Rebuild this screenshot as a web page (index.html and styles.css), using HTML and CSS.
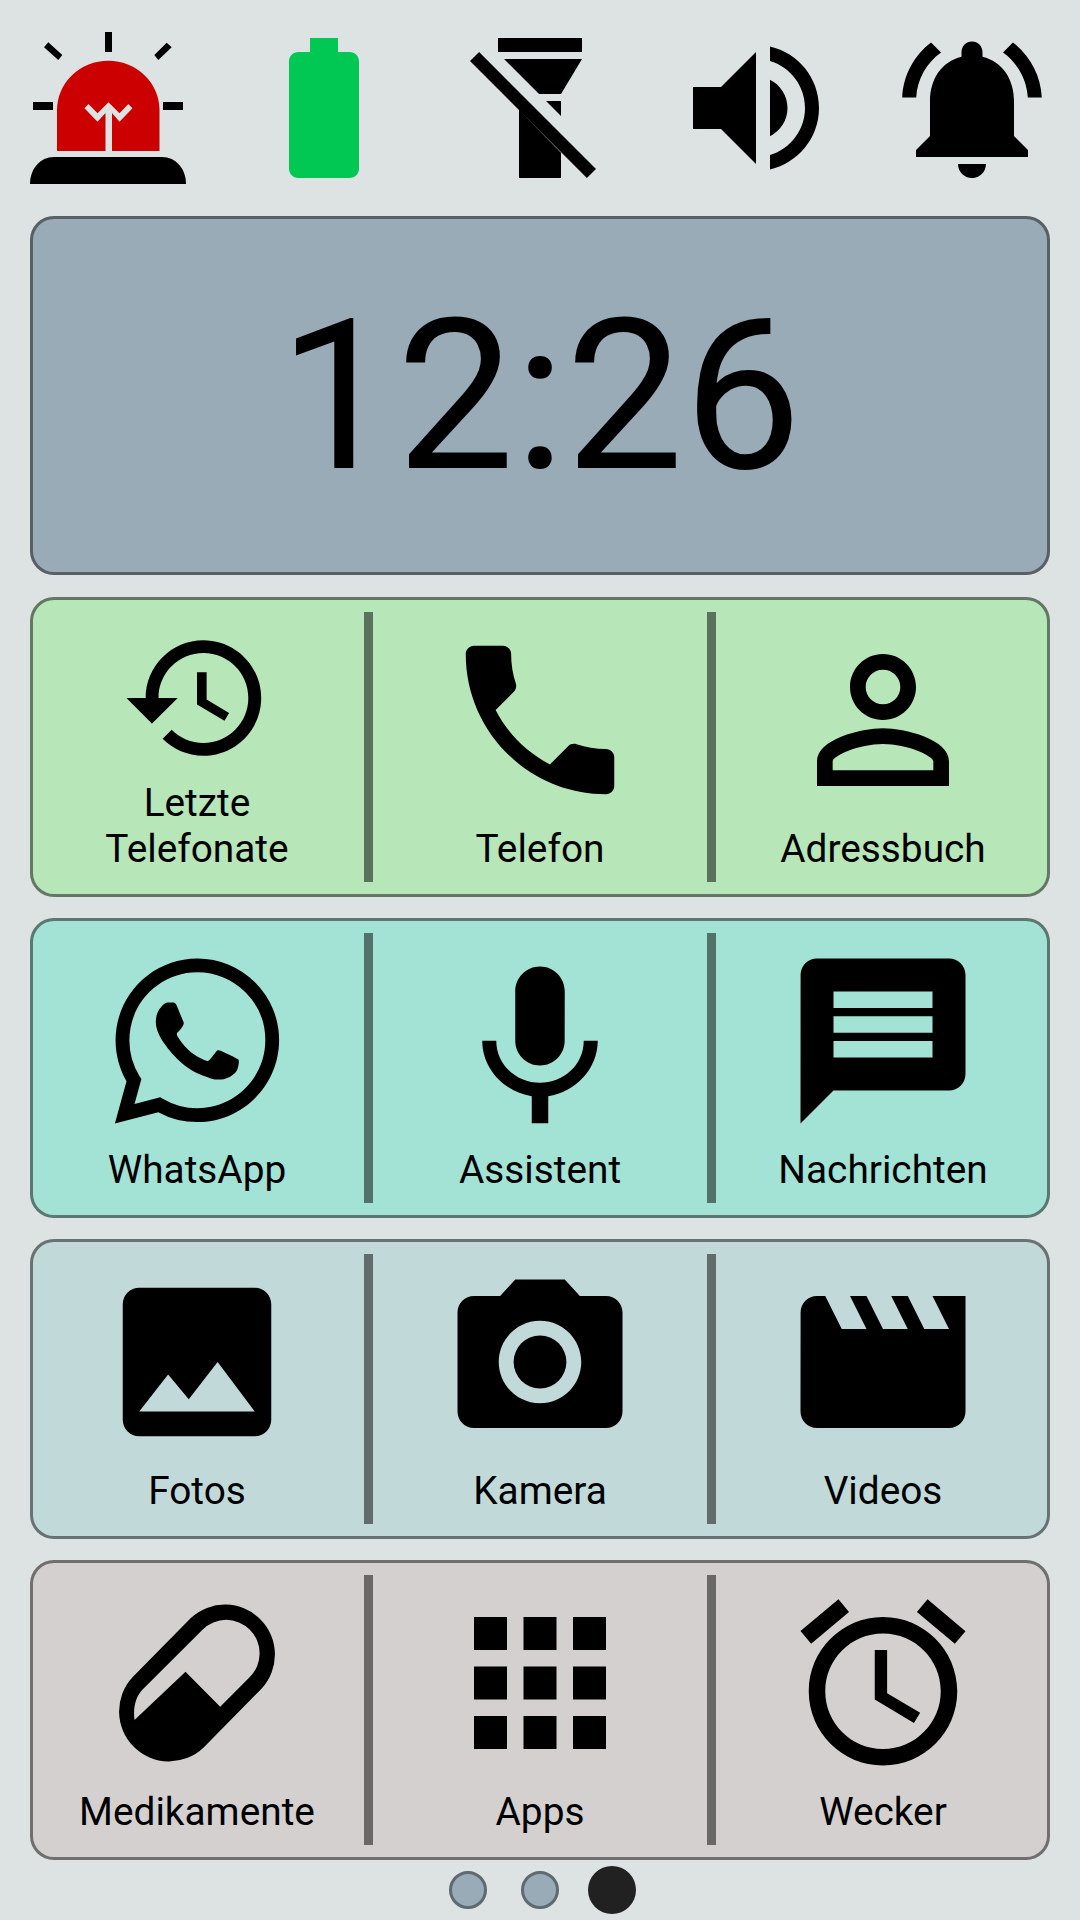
FILE: index.html
```html
<!DOCTYPE html>
<html lang="de">
<head>
<meta charset="utf-8">
<title>Startseite</title>
<link rel="stylesheet" href="styles.css">
</head>
<body>
<main class="screen">
  <header class="status">
    <svg class="status-icon" viewBox="24 24 168 168" aria-label="Notruf">
      <path d="M105 32h7v20h-7zM33 102h20v8H33zM163 102h20v8h-20zM48.300 42.300 62.300 55 58.300 60 44 47.300zM166.700 42.700l5 4.600L158.300 60l-4-5z" fill="#000"/>
      <path d="M57 151v-41a51 49 0 0 1 102.500 0v41h-47.500v-38l7.500 8.700 13-13.400-4.200-4.300-8.800 9.300-11-11-11 11-9-9.300-4.100 4.300 13.100 13.400 8-8.700v38z" fill="#c00"/>
      <path d="M30 184c0-15 10-27 24-27h108c14 0 24 12 24 27z" fill="#000"/>
    </svg>
    <svg class="status-icon" viewBox="0 0 24 24" aria-label="Akku">
      <path d="M15.670 4H14V2h-4v2H8.330C7.600 4 7 4.600 7 5.330v15.340C7 21.400 7.600 22 8.330 22h7.340c.74 0 1.330-.6 1.330-1.330V5.330C17 4.600 16.400 4 15.670 4z" fill="#00c853"/>
    </svg>
    <svg class="status-icon" viewBox="0 0 24 24" aria-label="Taschenlampe aus">
      <path d="M6 2h12v2H6zM6.860 5H18l-3 5h-3.140zM12.860 11H15v2.140zM9 12.300l6 6.100V22H9zM2 5.300 3.300 4 20 20.700 18.700 22z"/>
    </svg>
    <svg class="status-icon" viewBox="0 0 24 24" aria-label="Lautstärke">
      <path d="M3 9v6h4l5 5V4L7 9H3zM16.500 12c0-1.770-1.020-3.290-2.500-4.030v8.050c1.480-.73 2.500-2.250 2.500-4.020zM14 3.230v2.060c2.890.86 5 3.540 5 6.710s-2.110 5.850-5 6.710v2.060c4.010-.91 7-4.490 7-8.770s-2.990-7.860-7-8.770z"/>
    </svg>
    <svg class="status-icon" viewBox="0 0 24 24" aria-label="Klingel">
      <path d="M7.580 4.080 6.150 2.650C3.750 4.480 2.170 7.300 2.030 10.500h2c.15-2.650 1.510-4.970 3.550-6.420zm12.390 6.420h2c-.15-3.200-1.730-6.020-4.120-7.850l-1.420 1.430c2.020 1.450 3.390 3.770 3.540 6.420zM18 11c0-3.070-1.640-5.640-4.500-6.320V4c0-.83-.67-1.500-1.500-1.500s-1.500.67-1.500 1.500v.68C7.630 5.360 6 7.920 6 11v5l-2 2v1h16v-1l-2-2v-5zm-6 11c.14 0 .27-.01.4-.04.65-.14 1.180-.58 1.440-1.180.1-.24.15-.5.15-.78h-4c.01 1.100.9 2 2.010 2z"/>
    </svg>
  </header>

  <section class="card clock"><span class="time">12:26</span></section>

  <section class="card row row-green">
    <a class="cell">
      <svg class="icon icon-small" viewBox="0 0 24 24"><path d="M13 3c-4.970 0-9 4.030-9 9H1l3.890 3.890.07.14L9 12H6c0-3.870 3.130-7 7-7s7 3.130 7 7-3.130 7-7 7c-1.930 0-3.680-.79-4.940-2.060l-1.420 1.420C8.270 19.990 10.510 21 13 21c4.970 0 9-4.030 9-9s-4.030-9-9-9zm-1 5v5l4.280 2.540.72-1.210-3.500-2.080V8H12z"/></svg>
      <span class="label">Letzte<br>Telefonate</span>
    </a>
    <i class="divider"></i>
    <a class="cell">
      <svg class="icon" viewBox="0 0 24 24"><path d="M6.620 10.790c1.440 2.830 3.760 5.140 6.590 6.590l2.200-2.200c.27-.27.67-.36 1.020-.24 1.120.37 2.330.57 3.570.57.55 0 1 .45 1 1V20c0 .55-.45 1-1 1-9.390 0-17-7.610-17-17 0-.55.45-1 1-1h3.500c.55 0 1 .45 1 1 0 1.250.2 2.450.57 3.570.11.35.03.74-.25 1.020l-2.200 2.200z"/></svg>
      <span class="label">Telefon</span>
    </a>
    <i class="divider"></i>
    <a class="cell">
      <svg class="icon" viewBox="0 0 24 24"><path d="M12 5.900c1.160 0 2.100.94 2.100 2.100s-.94 2.100-2.100 2.100S9.900 9.160 9.900 8s.94-2.100 2.100-2.100m0 9c2.970 0 6.100 1.460 6.100 2.100v1.100H5.900V17c0-.64 3.130-2.100 6.100-2.100M12 4C9.790 4 8 5.790 8 8s1.790 4 4 4 4-1.790 4-4-1.790-4-4-4zm0 9c-2.670 0-8 1.340-8 4v3h16v-3c0-2.660-5.330-4-8-4z"/></svg>
      <span class="label">Adressbuch</span>
    </a>
  </section>

  <section class="card row row-teal">
    <a class="cell">
      <svg class="icon" viewBox="-2.400 -2.400 28.800 28.800"><path d="M17.472 14.382c-.297-.149-1.758-.867-2.030-.967-.273-.099-.471-.148-.67.15-.197.297-.767.966-.94 1.164-.173.199-.347.223-.644.075-.297-.15-1.255-.463-2.390-1.475-.883-.788-1.480-1.761-1.653-2.059-.173-.297-.018-.458.13-.606.134-.133.298-.347.446-.52.149-.174.198-.298.298-.497.099-.198.05-.371-.025-.52-.075-.149-.669-1.612-.916-2.207-.242-.579-.487-.5-.669-.51-.173-.008-.371-.01-.57-.01-.198 0-.52.074-.792.372-.272.297-1.040 1.016-1.040 2.479 0 1.462 1.065 2.875 1.213 3.074.149.198 2.096 3.200 5.077 4.487.709.306 1.262.489 1.694.625.712.227 1.360.195 1.871.118.571-.085 1.758-.719 2.006-1.413.248-.694.248-1.289.173-1.413-.074-.124-.272-.198-.57-.347m-5.421 7.403h-.004a9.870 9.870 0 0 1-5.031-1.378l-.361-.214-3.741.982.998-3.648-.235-.374a9.860 9.860 0 0 1-1.510-5.260c.001-5.450 4.436-9.884 9.888-9.884 2.640 0 5.122 1.030 6.988 2.898a9.825 9.825 0 0 1 2.893 6.994c-.003 5.450-4.437 9.884-9.885 9.884m8.413-18.297A11.815 11.815 0 0 0 12.050 0C5.495 0 .16 5.335.157 11.892c0 2.096.547 4.142 1.588 5.945L.057 24l6.305-1.654a11.882 11.882 0 0 0 5.683 1.448h.005c6.554 0 11.890-5.335 11.893-11.893a11.821 11.821 0 0 0-3.480-8.413z"/></svg>
      <span class="label">WhatsApp</span>
    </a>
    <i class="divider"></i>
    <a class="cell">
      <svg class="icon icon-low" viewBox="0 0 24 24"><path d="M12 14c1.660 0 2.990-1.340 2.990-3L15 5c0-1.660-1.340-3-3-3S9 3.340 9 5v6c0 1.660 1.340 3 3 3zm5.300-3c0 3-2.540 5.100-5.300 5.100S6.700 14 6.700 11H5c0 3.410 2.720 6.230 6 6.720V21h2v-3.280c3.280-.48 6-3.300 6-6.720h-1.700z"/></svg>
      <span class="label">Assistent</span>
    </a>
    <i class="divider"></i>
    <a class="cell">
      <svg class="icon" viewBox="0 0 24 24"><path d="M20 2H4c-1.100 0-1.990.9-1.990 2L2 22l4-4h14c1.100 0 2-.9 2-2V4c0-1.100-.9-2-2-2zm-2 12H6v-2h12v2zm0-3H6V9h12v2zm0-3H6V6h12v2z"/></svg>
      <span class="label">Nachrichten</span>
    </a>
  </section>

  <section class="card row row-blue">
    <a class="cell">
      <svg class="icon" viewBox="0 0 24 24"><path d="M21 19V5c0-1.100-.9-2-2-2H5c-1.100 0-2 .9-2 2v14c0 1.100.9 2 2 2h14c1.100 0 2-.9 2-2zM8.500 13.500l2.500 3.010L14.500 12l4.500 6H5l3.500-4.500z"/></svg>
      <span class="label">Fotos</span>
    </a>
    <i class="divider"></i>
    <a class="cell">
      <svg class="icon" viewBox="0 0 24 24"><circle cx="12" cy="12" r="3.200"/><path d="M9 2 7.170 4H4c-1.100 0-2 .9-2 2v12c0 1.100.9 2 2 2h16c1.100 0 2-.9 2-2V6c0-1.100-.9-2-2-2h-3.170L15 2H9zm3 15c-2.760 0-5-2.240-5-5s2.240-5 5-5 5 2.240 5 5-2.240 5-5 5z"/></svg>
      <span class="label">Kamera</span>
    </a>
    <i class="divider"></i>
    <a class="cell">
      <svg class="icon" viewBox="0 0 24 24"><path d="m18 4 2 4h-3l-2-4h-2l2 4h-3l-2-4H8l2 4H7L5 4H4c-1.100 0-1.990.9-1.990 2L2 18c0 1.100.9 2 2 2h16c1.100 0 2-.9 2-2V4h-4z"/></svg>
      <span class="label">Videos</span>
    </a>
  </section>

  <section class="card row row-grey">
    <a class="cell">
      <svg class="icon" viewBox="-4.500 -18 594 594"><path fill-rule="evenodd" d="M274 84A150 150 0 0 1 486 296L311 474A150 150 0 0 1 99 262ZM105 390C100 350 110 318 130 298L309 119A100 100 0 0 1 451 261L362 350 258 245Z"/></svg>
      <span class="label">Medikamente</span>
    </a>
    <i class="divider"></i>
    <a class="cell">
      <svg class="icon" viewBox="0 0 24 24"><path d="M4 8h4V4H4v4zm6 12h4v-4h-4v4zm-6 0h4v-4H4v4zm0-6h4v-4H4v4zm6 0h4v-4h-4v4zm6-10v4h4V4h-4zm-6 4h4V4h-4v4zm6 6h4v-4h-4v4zm0 6h4v-4h-4v4z"/></svg>
      <span class="label">Apps</span>
    </a>
    <i class="divider"></i>
    <a class="cell">
      <svg class="icon" viewBox="0 0 24 24"><path d="m22 5.720-4.600-3.860-1.290 1.530 4.600 3.860L22 5.720zM7.880 3.390 6.600 1.860 2 5.710l1.290 1.530 4.590-3.850zM12.500 8H11v6l4.750 2.850.75-1.230-4-2.370V8zM12 4c-4.970 0-9 4.030-9 9s4.030 9 9 9 9-4.030 9-9-4.030-9-9-9zm0 16c-3.870 0-7-3.130-7-7s3.130-7 7-7 7 3.130 7 7-3.130 7-7 7z"/></svg>
      <span class="label">Wecker</span>
    </a>
  </section>

  <nav class="pager">
    <i class="dot"></i><i class="dot"></i><i class="dot dot-active"></i>
  </nav>
</main>
</body>
</html>
```
FILE: styles.css
```css
* { box-sizing: border-box; }
html, body { margin: 0; padding: 0; }
body { background: #dde3e3; font-family: Roboto, "Noto Sans", sans-serif; color: #000; }
.screen { width: 1080px; height: 1920px; padding: 24px 30px 0; display: flex; flex-direction: column; overflow: hidden; }
.status { height: 168px; margin: 0 -30px 24px; display: flex; }
.status-icon { width: 168px; height: 168px; margin: 0 24px; fill: #000; flex: none; }
.card { border-radius: 24px; box-shadow: inset 0 0 0 3px rgba(45, 45, 45, .6); flex: none; }
.clock { height: 359px; margin-bottom: 22px; background: #9aabb8; display: flex; align-items: center; justify-content: center; }
.time { font-size: 210px; line-height: 1; }
.row { height: 300px; margin-bottom: 21px; padding: 15px 0; display: flex; }
.row-green { background: #b7e6b9; }
.row-teal { background: #a2e3d5; }
.row-blue { background: #c1dad9; }
.row-grey { background: #d4d0cf; margin-bottom: 6px; }
.cell { flex: 1; min-width: 0; display: flex; flex-direction: column; align-items: center; justify-content: flex-end; position: relative; }
.divider { width: 9px; flex: none; background: rgba(0, 0, 0, .5); }
.icon { width: 198px; height: 198px; position: absolute; left: 50%; top: 9px; transform: translateX(-50%); }
.icon-small { width: 154px; height: 154px; }
.icon-low { top: 17px; }
.label { font-size: 38.8px; line-height: 46px; text-align: center; margin-bottom: 10px; }
.pager { display: flex; justify-content: center; align-items: center; height: 48px; }
.dot { width: 38px; height: 38px; margin: 0 17px; border-radius: 50%; background: #9aabb8; border: 3px solid #5f6a70; }
.dot-active { width: 48px; height: 48px; margin: 0 12px; background: #212121; border: 0; }
```
